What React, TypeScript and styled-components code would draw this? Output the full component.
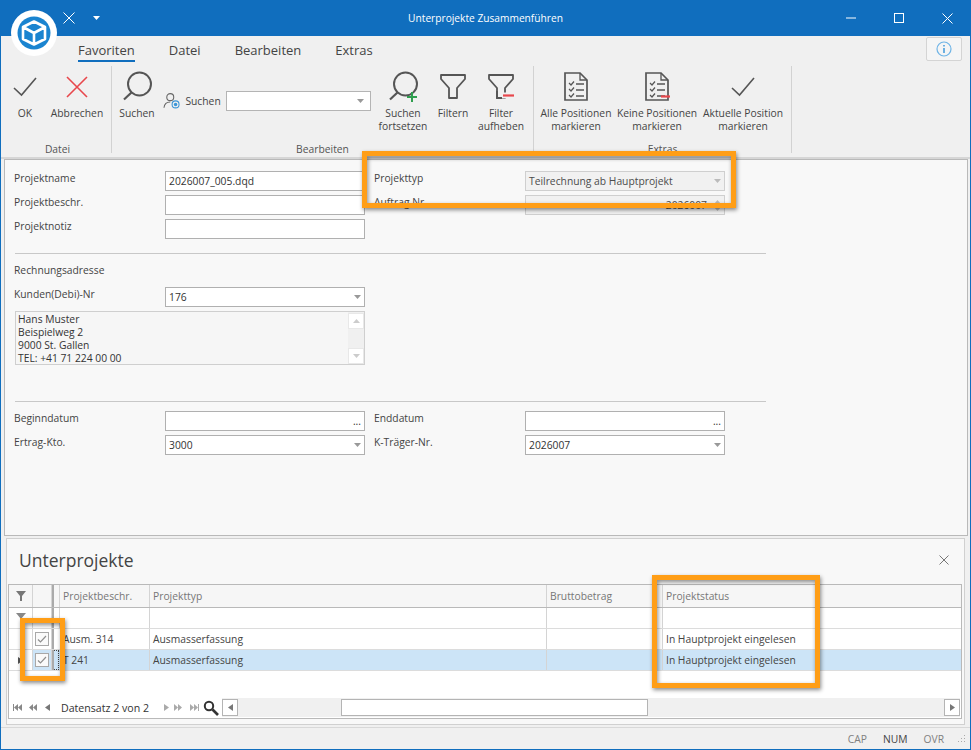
import React from 'react';
import styled, { createGlobalStyle } from 'styled-components';

const GlobalStyle = createGlobalStyle`
  html, body { margin: 0; padding: 0; background: #f0f0f0; }
  * { box-sizing: border-box; }
  #root { width: 971px; height: 750px; }
`;

const BLUE = '#106ebe';
const FONT = `"Open Sans", "Noto Sans", "Liberation Sans", sans-serif`;

const Win = styled.div`
  position: relative;
  width: 971px;
  height: 750px;
  overflow: hidden;
  display: flex;
  flex-direction: column;
  background: #f0f0f0;
  border-left: 1px solid ${BLUE};
  border-right: 1px solid ${BLUE};
  border-bottom: 1px solid ${BLUE};
  font-family: ${FONT};
  font-size: 10.3px;
  color: #444;
`;

const TitleBar = styled.div`
  height: 36px;
  flex: none;
  background: ${BLUE};
  color: #fff;
  display: grid;
  grid-template-columns: 1fr auto 1fr;
  align-items: center;
  margin: 0 -1px;
  font-size: 10.2px;
`;
const QuickAccess = styled.div`
  display: flex;
  align-items: center;
  gap: 18px;
  padding-left: 63px;
`;
const WinButtons = styled.div`
  display: flex;
  justify-content: flex-end;
  align-items: center;
  gap: 38px;
  padding-right: 18px;
`;

const LogoWrap = styled.div`
  position: absolute;
  left: 9px;
  top: 9px;
  width: 48px;
  height: 48px;
`;

const TabBar = styled.div`
  height: 28px;
  flex: none;
  display: flex;
  align-items: flex-start;
  padding: 6px 0 0 77px;
  gap: 34px;
  position: relative;
`;
const Tab = styled.div<{ $active?: boolean }>`
  font-size: 13px;
  line-height: 17px;
  padding-bottom: 1px;
  color: #444;
  border-bottom: 2px solid ${p => (p.$active ? BLUE : 'transparent')};
`;
const InfoButton = styled.div`
  position: absolute;
  right: 8px;
  top: 1px;
  width: 36px;
  height: 24px;
  display: flex;
  align-items: center;
  justify-content: center;
  background: #f5f5f5;
  border: 1px solid #d4d4d4;
  border-radius: 2px;
`;

const Ribbon = styled.div`
  height: 95px;
  flex: none;
  display: flex;
  align-items: stretch;
  padding: 2px 0 4px 3px;
  border-bottom: 2px solid #d6d6d6;
`;
const Group = styled.div<{ $w: number }>`
  width: ${p => p.$w}px;
  flex: none;
  display: flex;
  flex-direction: column;
  border-right: 1px solid #d2d2d2;
`;
const GroupItems = styled.div<{ $pad?: number }>`
  flex: 1;
  display: flex;
  align-items: flex-start;
  padding-left: ${p => p.$pad ?? 0}px;
`;
const GroupLabel = styled.div`
  text-align: center;
  line-height: 14px;
  height: 14px;
  margin-bottom: -3px;
  color: #555;
`;
const RibbonButton = styled.div<{ $w: number }>`
  width: ${p => p.$w}px;
  flex: none;
  display: flex;
  flex-direction: column;
  align-items: center;
  text-align: center;
  line-height: 13px;
  color: #444;
  white-space: pre-line;
`;
const IconBox = styled.div`
  height: 40px;
  margin-top: 1px;
  display: flex;
  align-items: center;
  justify-content: center;
`;
const SearchBox = styled.div`
  width: 208px;
  margin: 25px 3px 0 7px;
  flex: none;
  display: flex;
  align-items: center;
  gap: 5px;
`;
const SearchCombo = styled.div`
  width: 150px;
  height: 20px;
  margin-left: auto;
  background: #fff;
  border: 1px solid #b4b4b4;
  display: flex;
  align-items: center;
  justify-content: flex-end;
  padding-right: 6px;
`;

const FormPanel = styled.div`
  height: 377px;
  flex: none;
  margin: 0 2px 0 3px;
  padding: 11px 10px 0 9px;
  background: #f8f8f8;
  border: 1px solid #b9b9b9;
`;
const TwoCols = styled.div`
  display: grid;
  grid-template-columns: 351px 351px;
  column-gap: 9px;
  align-items: start;
`;
const Stack = styled.div`
  display: flex;
  flex-direction: column;
  gap: 4px;
`;
const Field = styled.div`
  display: flex;
  align-items: flex-start;
  height: 20px;
`;
const FieldLabel = styled.div`
  width: 151px;
  flex: none;
  line-height: 14px;
  color: #444;
`;
const Input = styled.div<{ $disabled?: boolean; $right?: boolean }>`
  width: 200px;
  height: 20px;
  flex: none;
  display: flex;
  align-items: center;
  justify-content: ${p => (p.$right ? 'flex-end' : 'space-between')};
  padding: 0 3px 0 3px;
  background: ${p => (p.$disabled ? '#f1f1f1' : '#fff')};
  border: 1px solid ${p => (p.$disabled ? '#cfcfcf' : '#b0b0b0')};
  color: ${p => (p.$disabled ? '#4c4c4c' : '#333')};
  white-space: nowrap;
`;
const Spinner = styled.div`
  display: flex;
  flex-direction: column;
  gap: 3px;
  margin-left: 7px;
`;
const Divider = styled.div<{ $top: number; $bottom: number }>`
  width: 751px;
  height: 1px;
  background: #c8c8c8;
  margin: ${p => p.$top}px 0 ${p => p.$bottom}px 1px;
`;
const SectionTitle = styled.div`
  line-height: 14px;
  margin-bottom: 10px;
`;
const Memo = styled.div`
  width: 350px;
  height: 54px;
  margin: 4px 0 0 1px;
  display: flex;
  justify-content: space-between;
  border: 1px solid #cfcfcf;
  background: #f6f6f6;
  padding-left: 2px;
  line-height: 13px;
  color: #333;
  overflow: hidden;
`;
const MemoText = styled.div`
  padding-top: 1px;
  white-space: pre-line;
`;
const MemoScroll = styled.div`
  width: 16px;
  display: flex;
  flex-direction: column;
  justify-content: space-between;
  background: #f0f0f0;
`;
const MemoArrow = styled.div`
  height: 16px;
  margin-top: 1px;
  background: #fff;
  border: 1px solid #e8e8e8;
  display: flex;
  align-items: center;
  justify-content: center;
`;

const SubPanel = styled.div`
  height: 187px;
  flex: none;
  margin: 2px 5px 2px 5px;
  border: 1px solid #d0d0d0;
  background: #f8f8f8;
  display: flex;
  flex-direction: column;
`;
const SubHeader = styled.div`
  height: 45px;
  flex: none;
  display: flex;
  align-items: center;
  justify-content: space-between;
  padding: 0 15px 4px 12px;
  font-size: 17.5px;
  color: #444;
`;
const GridBox = styled.div`
  margin: 0 2px 0 1px;
  height: 135px;
  flex: none;
  border: 1px solid #b9b9b9;
  background: #fff;
  display: flex;
  flex-direction: column;
  position: relative;
`;
const GridRow = styled.div<{ $h: number; $header?: boolean }>`
  height: ${p => p.$h}px;
  flex: none;
  display: grid;
  grid-template-columns: 24px 19px 2px 5px 90px 397px 116px 1fr;
  align-items: stretch;
  border-bottom: 1px solid ${p => (p.$header ? '#b9b9b9' : '#dcdcdc')};
  background: ${p => (p.$header ? '#f6f6f6' : '#fff')};
  color: ${p => (p.$header ? '#777' : '#444')};
`;
const Cell = styled.div<{ $selected?: boolean; $line?: boolean }>`
  display: flex;
  align-items: center;
  justify-content: flex-start;
  min-width: 0;
  white-space: nowrap;
  padding-left: 3px;
  background: ${p => (p.$selected ? '#cce4f7' : 'transparent')};
  border-left: 1px solid ${p => (p.$line ? '#d4d4d4' : 'transparent')};
`;
const IconCell = styled(Cell)`
  padding: 0;
  justify-content: center;
  border-left: none;
  border-right: 1px solid #d4d4d4;
`;
const FilterMark = styled(IconCell)`
  align-items: flex-start;
  padding-top: 5px;
`;
const ThickBar = styled.div`
  background: #aaa;
`;
const Focus = styled.div`
  border: 1px dotted #444;
  border-left: none;
  background: #cce4f7;
`;
const CheckBox = styled.div`
  width: 14px;
  height: 14px;
  border: 1px solid #a8a8a8;
  background: #fafafa;
  display: flex;
  align-items: center;
  justify-content: center;
`;
const GridFill = styled.div`
  flex: 1;
`;
const NavBar = styled.div`
  height: 21px;
  flex: none;
  display: flex;
  align-items: center;
  padding-left: 4px;
`;
const NavIcons = styled.div`
  display: flex;
  align-items: center;
  gap: 5px;
`;
const NavText = styled.div`
  margin: 0 11px 0 11px;
  width: 92px;
  font-size: 10.6px;
  white-space: nowrap;
  color: #333;
`;
const ScrollTrack = styled.div`
  flex: 1;
  height: 19px;
  margin: 0 1px 0 3px;
  background: #f0f0f0;
  display: flex;
  align-items: center;
`;
const ScrollBtn = styled.div`
  width: 16px;
  height: 17px;
  flex: none;
  background: #fff;
  border: 1px solid #b4b4b4;
  display: flex;
  align-items: center;
  justify-content: center;
`;
const ScrollThumb = styled.div`
  width: 307px;
  height: 17px;
  margin-left: 103px;
  margin-right: auto;
  background: #fff;
  border: 1px solid #b4b4b4;
`;

const StatusBar = styled.div`
  flex: 1;
  display: flex;
  justify-content: flex-end;
  align-items: center;
  gap: 16px;
  padding-right: 4px;
  border-top: 1px solid #d8d8d8;
  color: #666;
`;
const StatusItem = styled.span<{ $on?: boolean }>`
  color: ${p => (p.$on ? '#444' : '#808080')};
`;
const Grip = styled.svg`
  margin-left: -4px;
`;

const Highlight = styled.div<{ $x: number; $y: number; $w: number; $h: number }>`
  position: absolute;
  left: ${p => p.$x - 1}px;
  top: ${p => p.$y}px;
  width: ${p => p.$w}px;
  height: ${p => p.$h}px;
  border: 5px solid #ff9e17;
  box-shadow: 1px 2px 4px rgba(0, 0, 0, 0.45), inset 1px 2px 4px rgba(0, 0, 0, 0.45);
`;

const Caret = ({ color = '#999', up = false }: { color?: string; up?: boolean }) => (
  <svg width="7" height="4" viewBox="0 0 7 4">
    <path d={up ? 'M0 4 L3.5 0 L7 4 Z' : 'M0 0 L7 0 L3.5 4 Z'} fill={color} />
  </svg>
);

const Tri = ({ dir, color = '#777' }: { dir: 'l' | 'r'; color?: string }) => (
  <svg width="5" height="7" viewBox="0 0 5 7">
    <path d={dir === 'l' ? 'M5 0 L5 7 L0 3.5 Z' : 'M0 0 L0 7 L5 3.5 Z'} fill={color} />
  </svg>
);

const NavGlyph = ({ d, color = '#888' }: { d: string; color?: string }) => (
  <svg width="11" height="7" viewBox="0 0 11 7">
    <path d={d} fill={color} />
  </svg>
);

const CheckIcon = () => (
  <svg width="26" height="24" viewBox="0 0 26 24" fill="none">
    <path d="M2 13 L9.5 20 L24 3" stroke="#555" strokeWidth="1.6" />
  </svg>
);
const CrossIcon = () => (
  <svg width="24" height="24" viewBox="0 0 24 24" fill="none">
    <path d="M2 2 L22 22 M22 2 L2 22" stroke="#e8474c" strokeWidth="1.6" />
  </svg>
);
const LensIcon = ({ plus }: { plus?: boolean }) => (
  <svg width="32" height="32" viewBox="0 0 32 32" fill="none">
    <circle cx="18.5" cy="13" r="11.5" stroke="#555" strokeWidth="2" />
    <path d="M11 21 L3 28.5" stroke="#555" strokeWidth="2.2" />
    {plus && <path d="M25 21 V31 M20 26 H30" stroke="#2f9e4f" strokeWidth="2" />}
  </svg>
);
const FunnelIcon = ({ minus }: { minus?: boolean }) => (
  <svg width="28" height="28" viewBox="0 0 28 28" fill="none">
    <path d="M2 2 H26 V6 L18 15 V25 H10 V15 L2 6 Z" stroke="#555" strokeWidth="1.8" strokeLinejoin="round" />
    {minus && <path d="M15 22.5 H27" stroke="#f0f0f0" strokeWidth="6" />}
    {minus && <path d="M16 22.5 H27" stroke="#e8474c" strokeWidth="2.2" />}
    {minus && <path d="M10 18 V25 H15" stroke="#555" strokeWidth="1.8" />}
  </svg>
);
const ListIcon = ({ minus }: { minus?: boolean }) => (
  <svg width="26" height="30" viewBox="0 0 26 30" fill="none">
    <path d="M2 1 H17 L24 8 V28 H2 Z" stroke="#555" strokeWidth="1.7" />
    <path d="M17 1 V8 H24" stroke="#555" strokeWidth="1.3" />
    <path d="M6 11 L8 13 L11 9.5 M6 17 L8 19 L11 15.5 M6 23 L8 25 L11 21.5" stroke="#555" strokeWidth="1.2" />
    <path d="M13 12 H21 M13 18 H21 M13 24 H21" stroke="#555" strokeWidth="1.6" />
    {minus && <path d="M17 24.5 H27" stroke="#e8474c" strokeWidth="2.2" />}
  </svg>
);
const UserIcon = () => (
  <svg width="18" height="18" viewBox="0 0 18 18" fill="none">
    <circle cx="7.5" cy="5" r="3.6" stroke="#666" strokeWidth="1.1" />
    <path d="M1 16 C1.5 11.5 4 10 7.5 10" stroke="#666" strokeWidth="1.1" />
    <circle cx="13" cy="12.5" r="3.6" stroke="#3b95d6" strokeWidth="1.1" />
    <circle cx="13" cy="12.5" r="1.8" fill="#3b95d6" />
  </svg>
);
const Logo = () => (
  <svg width="48" height="48" viewBox="0 0 48 48">
    <circle cx="24" cy="24" r="23" fill="#fff" />
    <circle cx="24" cy="24" r="16.5" fill="#1a84d0" />
    <path d="M24 12.5 L35 18 V30 L24 35.5 L13 30 V18 Z M24 24 V35.5 M13 18 L24 24 L35 18" fill="none" stroke="#fff" strokeWidth="2.6" strokeLinejoin="round" />
  </svg>
);
const FunnelSmall = () => (
  <svg width="10" height="10" viewBox="0 0 10 10">
    <path d="M0 0 H10 L6 5 V10 H4 V5 Z" fill="#777" />
  </svg>
);
const FilterRowMark = () => (
  <svg width="10" height="6" viewBox="0 0 10 6">
    <path d="M0 0 H10 L5 6 Z" fill="#888" />
  </svg>
);
const SmallCheck = () => (
  <svg width="10" height="8" viewBox="0 0 10 8" fill="none">
    <path d="M1 4.5 L3.5 7 L9 1" stroke="#8f8f8f" strokeWidth="1.2" />
  </svg>
);

const columns = ['Projektbeschr.', 'Projekttyp', 'Bruttobetrag', 'Projektstatus'];
const rows = [
  { id: 'Ausm. 314', selected: false },
  { id: 'T 241', selected: true },
];

export default function App() {
  return (
    <Win>
      <GlobalStyle />
      <TitleBar>
        <QuickAccess>
          <svg width="12" height="12" viewBox="0 0 12 12" fill="none">
            <path d="M0.5 0.5 L11.5 11.5 M11.5 0.5 L0.5 11.5" stroke="#fff" strokeWidth="1" />
          </svg>
          <Caret color="#fff" />
        </QuickAccess>
        <span>Unterprojekte Zusammenführen</span>
        <WinButtons>
          <svg width="10" height="10" viewBox="0 0 10 10"><path d="M0 5 H10" stroke="#fff" strokeWidth="1" /></svg>
          <svg width="10" height="10" viewBox="0 0 10 10" fill="none"><rect x="0.5" y="0.5" width="9" height="9" stroke="#fff" /></svg>
          <svg width="11" height="11" viewBox="0 0 11 11" fill="none"><path d="M0.5 0.5 L10.5 10.5 M10.5 0.5 L0.5 10.5" stroke="#fff" /></svg>
        </WinButtons>
      </TitleBar>
      <LogoWrap><Logo /></LogoWrap>

      <TabBar>
        <Tab $active>Favoriten</Tab>
        <Tab>Datei</Tab>
        <Tab>Bearbeiten</Tab>
        <Tab>Extras</Tab>
        <InfoButton>
          <svg width="16" height="16" viewBox="0 0 16 16" fill="none">
            <circle cx="8" cy="8" r="7" stroke="#6fb4e6" strokeWidth="1.2" />
            <path d="M8 7 V12 M8 4 V5.5" stroke="#4a9fdc" strokeWidth="1.6" />
          </svg>
        </InfoButton>
      </TabBar>

      <Ribbon>
        <Group $w={108}>
          <GroupItems>
            <RibbonButton $w={42}><IconBox><CheckIcon /></IconBox>OK</RibbonButton>
            <RibbonButton $w={62}><IconBox><CrossIcon /></IconBox>Abbrechen</RibbonButton>
          </GroupItems>
          <GroupLabel>Datei</GroupLabel>
        </Group>
        <Group $w={422}>
          <GroupItems $pad={6}>
            <RibbonButton $w={38}><IconBox><LensIcon /></IconBox>Suchen</RibbonButton>
            <SearchBox>
              <UserIcon />
              <span>Suchen</span>
              <SearchCombo><Caret /></SearchCombo>
            </SearchBox>
            <RibbonButton $w={58}><IconBox><LensIcon plus /></IconBox>{'Suchen\nfortsetzen'}</RibbonButton>
            <RibbonButton $w={42}><IconBox><FunnelIcon /></IconBox>Filtern</RibbonButton>
            <RibbonButton $w={54}><IconBox><FunnelIcon minus /></IconBox>{'Filter\naufheben'}</RibbonButton>
          </GroupItems>
          <GroupLabel>Bearbeiten</GroupLabel>
        </Group>
        <Group $w={258}>
          <GroupItems $pad={2}>
            <RibbonButton $w={80}><IconBox><ListIcon /></IconBox>{'Alle Positionen\nmarkieren'}</RibbonButton>
            <RibbonButton $w={82}><IconBox><ListIcon minus /></IconBox>{'Keine Positionen\nmarkieren'}</RibbonButton>
            <RibbonButton $w={90}><IconBox><CheckIcon /></IconBox>{'Aktuelle Position\nmarkieren'}</RibbonButton>
          </GroupItems>
          <GroupLabel>Extras</GroupLabel>
        </Group>
      </Ribbon>

      <FormPanel>
        <TwoCols>
          <Stack>
            <Field><FieldLabel>Projektname</FieldLabel><Input>2026007_005.dqd</Input></Field>
            <Field><FieldLabel>Projektbeschr.</FieldLabel><Input /></Field>
            <Field><FieldLabel>Projektnotiz</FieldLabel><Input /></Field>
          </Stack>
          <Stack>
            <Field><FieldLabel>Projekttyp</FieldLabel><Input $disabled>Teilrechnung ab Hauptprojekt<Caret color="#bbb" /></Input></Field>
            <Field>
              <FieldLabel>Auftrag Nr.</FieldLabel>
              <Input $disabled $right>
                2026007
                <Spinner><Caret color="#bbb" up /><Caret color="#bbb" /></Spinner>
              </Input>
            </Field>
          </Stack>
        </TwoCols>
        <Divider $top={14} $bottom={9} />
        <SectionTitle>Rechnungsadresse</SectionTitle>
        <Field><FieldLabel>Kunden(Debi)-Nr</FieldLabel><Input>176<Caret /></Input></Field>
        <Memo>
          <MemoText>{'Hans Muster\nBeispielweg 2\n9000 St. Gallen\nTEL: +41 71 224 00 00'}</MemoText>
          <MemoScroll>
            <MemoArrow><Caret color="#ccc" up /></MemoArrow>
            <MemoArrow><Caret color="#ccc" /></MemoArrow>
          </MemoScroll>
        </Memo>
        <Divider $top={36} $bottom={9} />
        <TwoCols>
          <Stack>
            <Field><FieldLabel>Beginndatum</FieldLabel><Input>&nbsp;<span>...</span></Input></Field>
            <Field><FieldLabel>Ertrag-Kto.</FieldLabel><Input>3000<Caret /></Input></Field>
          </Stack>
          <Stack>
            <Field><FieldLabel>Enddatum</FieldLabel><Input>&nbsp;<span>...</span></Input></Field>
            <Field><FieldLabel>K-Träger-Nr.</FieldLabel><Input>2026007<Caret /></Input></Field>
          </Stack>
        </TwoCols>
      </FormPanel>

      <SubPanel>
        <SubHeader>
          Unterprojekte
          <svg width="10" height="10" viewBox="0 0 10 10" fill="none"><path d="M0.5 0.5 L9.5 9.5 M9.5 0.5 L0.5 9.5" stroke="#777" /></svg>
        </SubHeader>
        <GridBox>
          <GridRow $h={23} $header>
            <IconCell><FunnelSmall /></IconCell>
            <IconCell />
            <ThickBar />
            <Cell />
            {columns.map(c => <Cell key={c} $line>{c}</Cell>)}
          </GridRow>
          <GridRow $h={21}>
            <FilterMark><FilterRowMark /></FilterMark>
            <IconCell />
            <ThickBar />
            <Cell />
            {columns.map(c => <Cell key={c} $line />)}
          </GridRow>
          {rows.map(r => (
            <GridRow key={r.id} $h={21}>
              <IconCell>{r.selected && <Tri dir="r" color="#555" />}</IconCell>
              <IconCell $selected={r.selected}><CheckBox><SmallCheck /></CheckBox></IconCell>
              <ThickBar />
              {r.selected ? <Focus /> : <Cell />}
              <Cell $selected={r.selected}>{r.id}</Cell>
              <Cell $selected={r.selected} $line>Ausmasserfassung</Cell>
              <Cell $selected={r.selected} $line />
              <Cell $selected={r.selected} $line>In Hauptprojekt eingelesen</Cell>
            </GridRow>
          ))}
          <GridFill />
          <NavBar>
            <NavIcons>
              <NavGlyph d="M0 0 H1 V7 H0 Z M1 3.5 L5 0 V7 Z M5 3.5 L9 0 V7 Z" />
              <NavGlyph d="M0 3.5 L4 0 V7 Z M4 3.5 L8 0 V7 Z" />
              <Tri dir="l" />
            </NavIcons>
            <NavText>Datensatz 2 von 2</NavText>
            <NavIcons>
              <Tri dir="r" color="#aaa" />
              <NavGlyph color="#aaa" d="M0 0 L4 3.5 L0 7 Z M4 0 L8 3.5 L4 7 Z" />
              <NavGlyph color="#aaa" d="M0 0 L4 3.5 L0 7 Z M4 0 L8 3.5 L4 7 Z M8 0 H9 V7 H8 Z" />
            </NavIcons>
            <svg width="16" height="16" viewBox="0 0 16 16" fill="none" style={{ marginLeft: 2 }}>
              <circle cx="6" cy="6" r="4.2" stroke="#333" strokeWidth="2" />
              <path d="M9.5 9.5 L15 15" stroke="#333" strokeWidth="2.6" />
            </svg>
            <ScrollTrack>
              <ScrollBtn><Tri dir="l" /></ScrollBtn>
              <ScrollThumb />
              <ScrollBtn><Tri dir="r" /></ScrollBtn>
            </ScrollTrack>
          </NavBar>
        </GridBox>
      </SubPanel>

      <StatusBar>
        <StatusItem>CAP</StatusItem>
        <StatusItem $on>NUM</StatusItem>
        <StatusItem>OVR</StatusItem>
        <Grip width="10" height="10" viewBox="0 0 10 10">
          <path d="M8 1h1v1H8z M5 4h1v1H5z M8 4h1v1H8z M2 7h1v1H2z M5 7h1v1H5z M8 7h1v1H8z" fill="#aaa" />
        </Grip>
      </StatusBar>

      <Highlight $x={362} $y={151} $w={374} $h={57} />
      <Highlight $x={20} $y={618} $w={45} $h={63} />
      <Highlight $x={652} $y={575} $w={168} $h={113} />
    </Win>
  );
}
